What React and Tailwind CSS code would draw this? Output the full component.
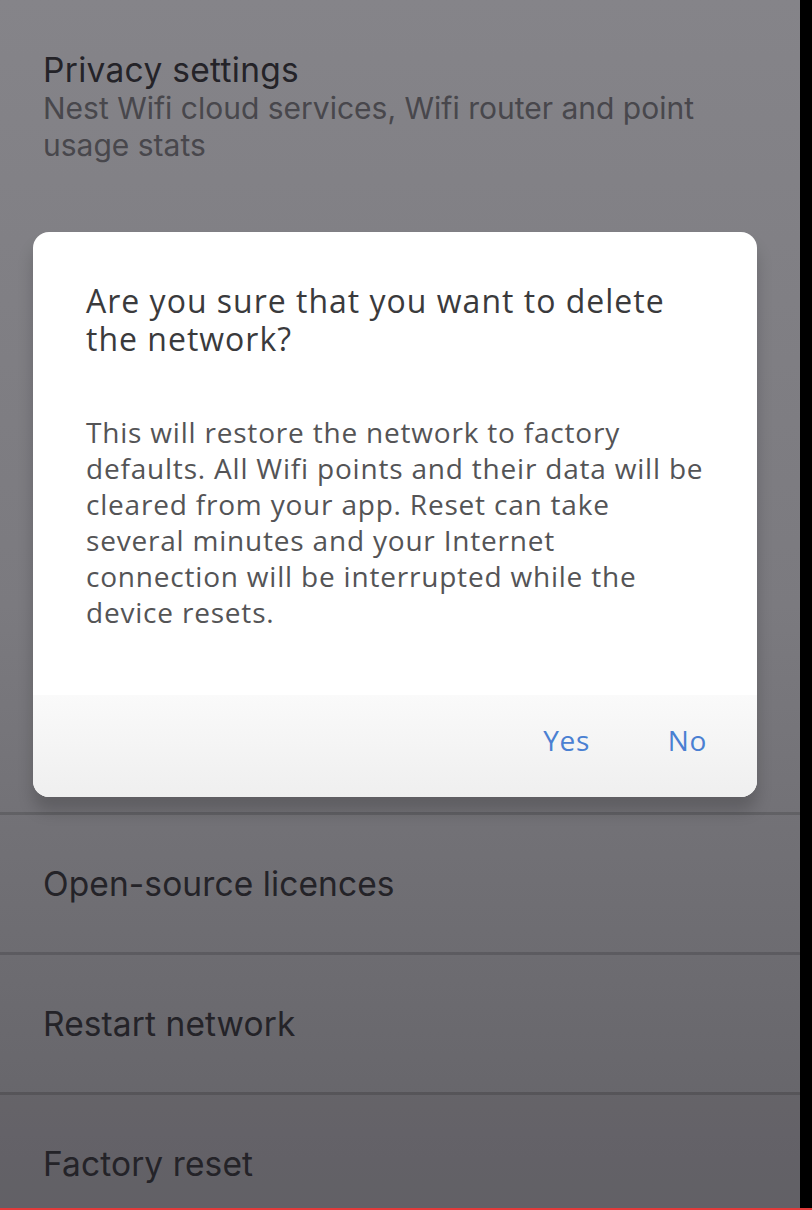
import React from 'react';

const listFont = { fontFamily: 'Inter, "Liberation Sans", sans-serif' };
const dialogFont = { fontFamily: '"Open Sans", "Noto Sans", sans-serif' };

function Row({ children, className = '' }) {
  return (
    <div className={`shrink-0 flex items-center h-[140px] pl-[43px] border-t-[3px] border-black/15 ${className}`}>
      <span className="text-[33.5px] leading-[40px] text-[#242328] tracking-[0.1px]" style={listFont}>{children}</span>
    </div>
  );
}

export default function App() {
  return (
    <div className="relative w-[812px] h-[1210px] overflow-hidden flex bg-black">
      {/* page behind the dim */}
      <div className="w-[800px] h-full flex flex-col bg-gradient-to-b from-[#858489] via-[#7b7a7f] to-[#636267]">
        <div className="shrink-0 pt-[50px] pl-[43px] pr-[30px] h-[672px]" style={listFont}>
          <div className="text-[33.5px] leading-[40px] text-[#242328] tracking-[0.3px]">Privacy settings</div>
          <div className="text-[30px] leading-[37px] text-[#48474c]">
            Nest Wifi cloud services, Wifi router and point usage stats
          </div>
        </div>
        <div className="shrink-0 h-[140px]" />
        <Row>Open-source licences</Row>
        <Row>Restart network</Row>
        <Row className="bg-[#5f5e63]/30">Factory reset</Row>
      </div>

      {/* dialog */}
      <div className="absolute left-[33px] top-[232px] w-[724px] h-[565px] rounded-[16px] bg-white overflow-hidden flex flex-col shadow-[0_14px_16px_rgba(0,0,0,0.18)]" style={dialogFont}>
        <div className="flex-1 pt-[50px] pl-[53px] pr-[48px]">
          <div className="text-[32px] leading-[38px] text-[#3a3a3c] tracking-[1px]">
            Are you sure that you want to delete the network?
          </div>
          <div className="mt-[56px] text-[28px] leading-[36px] text-[#545456] tracking-[0.8px]">
            This will restore the network to factory defaults. All Wifi points and their data will be cleared from your app. Reset can take several minutes and your Internet connection will be interrupted while the device resets.
          </div>
        </div>
        <div className="h-[102px] bg-gradient-to-b from-[#fafafa] to-[#efefef] flex items-center justify-end pr-[50px] gap-[78px] pb-[12px]">
          <span className="text-[28px] text-[#4a80d2] tracking-[0.6px]">Yes</span>
          <span className="text-[28px] text-[#4a80d2] tracking-[0.6px]">No</span>
        </div>
      </div>

      <div className="absolute left-0 bottom-0 w-full h-[2px] bg-[#e33a3a]" />
    </div>
  );
}
